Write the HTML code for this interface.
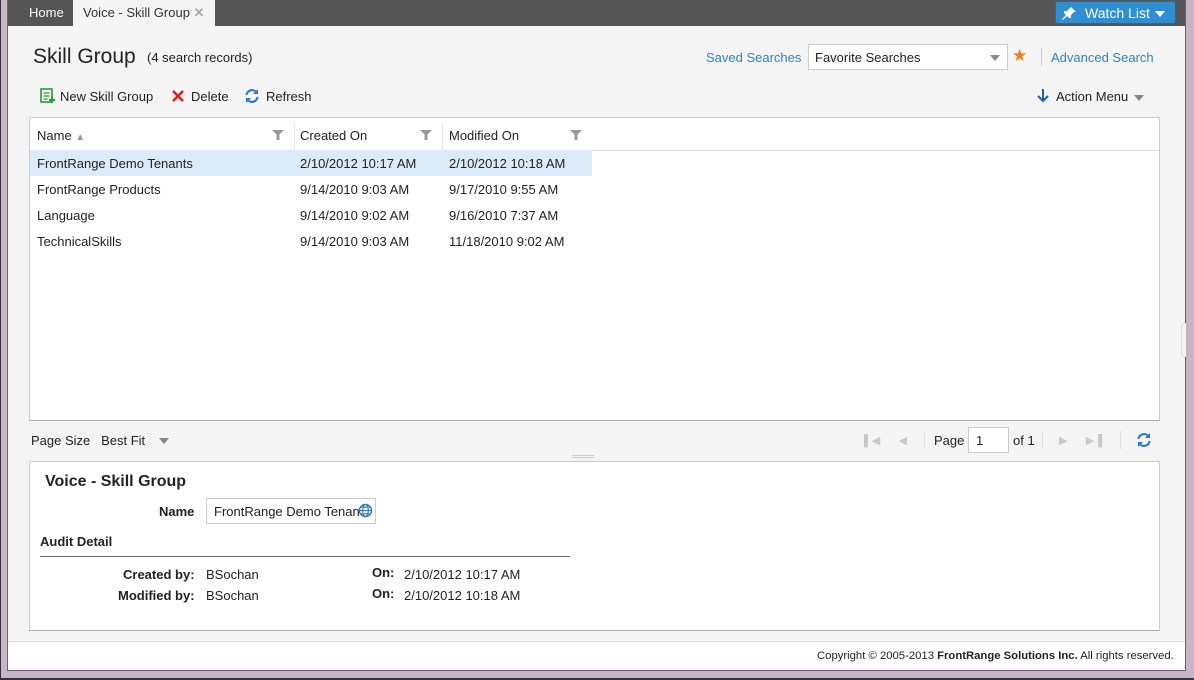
<!DOCTYPE html>
<html><head><meta charset="utf-8"><style>
*{margin:0;padding:0;box-sizing:border-box}
body{width:1194px;height:680px;overflow:hidden;font-family:"Liberation Sans",Arial,sans-serif;font-size:13px;color:#222;background:#c8b4c8;position:relative}
.a{position:absolute;white-space:nowrap}
.blue{color:#2a86c8}
.tri{display:inline-block;width:0;height:0;border-left:5px solid transparent;border-right:5px solid transparent;border-top:6px solid #888}
.filt{position:absolute;top:12px;width:12px;height:10px}
.row{position:absolute;left:0;width:562px;height:26px;line-height:26px}
.row span{position:absolute}
</style></head><body>
<div class="a" style="left:0;top:0;width:1px;height:680px;background:#333"></div>
<div class="a" style="left:7px;top:0;width:1px;height:671px;background:#7a5a7a"></div>
<div class="a" style="left:1185px;top:0;width:1px;height:671px;background:#7a5a7a"></div>
<div class="a" style="left:0;top:678px;width:1194px;height:2px;background:#333"></div>
<div class="a" style="left:7px;top:670px;width:1179px;height:1px;background:#7a5a7a"></div>
<!-- top bar -->
<div class="a" style="left:8px;top:0;width:1177px;height:26px;background:#555"></div>
<div class="a" style="left:29px;top:5px;color:#fff">Home</div>
<div class="a" style="left:73px;top:0;width:142px;height:27px;background:#f4f4f4"></div>
<div class="a" style="left:83px;top:5px;color:#333">Voice - Skill Group <span style="color:#aaa;font-weight:bold">✕</span></div>
<div class="a" style="left:1055px;top:1px;width:121px;height:23px;background:#2f8fd0;border:1px solid #1c6ea8;border-radius:3px"></div>
<svg class="a" style="left:1062px;top:6px" width="16" height="14" viewBox="0 0 16 14"><path d="M9 1l5 5-2 0-3 3 0 3-2 0-2-2-4 4-1-1 4-4-2-2 0-2 3 0 3-3z" fill="#fff"/></svg>
<div class="a" style="left:1085px;top:5px;color:#fff;font-size:14px">Watch List</div>
<div class="a" style="left:1155px;top:11px;border-left:5px solid transparent;border-right:5px solid transparent;border-top:6px solid #fff;width:0;height:0"></div>
<!-- main -->
<div class="a" style="left:8px;top:26px;width:1177px;height:615px;background:#f4f4f4"></div>
<div class="a" style="left:8px;top:641px;width:1177px;height:29px;background:#fff;border-top:1px solid #ddd"></div>
<div class="a" style="left:33px;top:45px;font-size:21px;color:#222">Skill Group</div>
<div class="a" style="left:147px;top:50px;font-size:13px">(4 search records)</div>
<div class="a blue" style="left:706px;top:50px">Saved Searches</div>
<div class="a" style="left:808px;top:44px;width:200px;height:26px;background:#fff;border:1px solid #ccc"></div>
<div class="a" style="left:815px;top:50px">Favorite Searches</div>
<div class="a tri" style="left:990px;top:55px"></div>
<div class="a" style="left:1012px;top:46px;color:#f47d0f;font-size:17px">★</div>
<div class="a" style="left:1041px;top:48px;width:1px;height:18px;background:#ccc"></div>
<div class="a blue" style="left:1051px;top:50px">Advanced Search</div>
<!-- toolbar -->
<svg class="a" style="left:40px;top:88px" width="16" height="16" viewBox="0 0 16 16"><rect x="1" y="1" width="11" height="13" fill="none" stroke="#2a9a3a" stroke-width="1.6"/><path d="M3.5 5h6M3.5 8h6M3.5 11h4" stroke="#2a9a3a" stroke-width="1.3"/><path d="M12 9v6M9 12h6" stroke="#2a9a3a" stroke-width="2"/></svg>
<div class="a" style="left:60px;top:89px">New Skill Group</div>
<svg class="a" style="left:171px;top:89px" width="14" height="14" viewBox="0 0 14 14"><path d="M2 2l10 10M12 2L2 12" stroke="#e02020" stroke-width="2.6"/></svg>
<div class="a" style="left:191px;top:89px">Delete</div>
<svg class="a" style="left:244px;top:88px" width="16" height="16" viewBox="0 0 16 16"><path d="M2.5 7A5.5 5.5 0 0 1 12.5 4.5" fill="none" stroke="#2a7ac8" stroke-width="2.2"/><path d="M14 1v5h-5z" fill="#2a7ac8"/><path d="M13.5 9A5.5 5.5 0 0 1 3.5 11.5" fill="none" stroke="#2a7ac8" stroke-width="2.2"/><path d="M2 15v-5h5z" fill="#2a7ac8"/></svg>
<div class="a" style="left:266px;top:89px">Refresh</div>
<svg class="a" style="left:1036px;top:88px" width="14" height="15" viewBox="0 0 14 15"><path d="M7 1v12M2 8l5 5 5-5" fill="none" stroke="#1a66b0" stroke-width="2"/></svg>
<div class="a" style="left:1056px;top:89px">Action Menu</div>
<div class="a tri" style="left:1134px;top:95px"></div>
<!-- grid -->
<div class="a" style="left:29px;top:117px;width:1131px;height:304px;background:#fff;border:1px solid #ccc;border-bottom-color:#aaa">
 <div class="a" style="left:0;top:32px;width:1129px;height:1px;background:#ddd"></div>
 <div class="a" style="left:264px;top:6px;width:1px;height:26px;background:#e4e4e4"></div>
 <div class="a" style="left:412px;top:6px;width:1px;height:26px;background:#e4e4e4"></div>
 <div class="a" style="left:7px;top:10px">Name <span style="color:#999;font-size:10px">▲</span></div>
 <svg class="filt" style="left:242px" viewBox="0 0 12 10"><path d="M0 0h12L7.5 4.5V10h-3V4.5z" fill="#999"/></svg>
 <div class="a" style="left:270px;top:10px">Created On</div>
 <svg class="filt" style="left:390px" viewBox="0 0 12 10"><path d="M0 0h12L7.5 4.5V10h-3V4.5z" fill="#999"/></svg>
 <div class="a" style="left:419px;top:10px">Modified On</div>
 <svg class="filt" style="left:540px" viewBox="0 0 12 10"><path d="M0 0h12L7.5 4.5V10h-3V4.5z" fill="#999"/></svg>
 <div class="row" style="top:32px;background:#dcebf9;line-height:28px"><span style="left:7px">FrontRange Demo Tenants</span><span style="left:270px">2/10/2012 10:17 AM</span><span style="left:419px">2/10/2012 10:18 AM</span></div>
 <div class="row" style="top:59px"><span style="left:7px">FrontRange Products</span><span style="left:270px">9/14/2010 9:03 AM</span><span style="left:419px">9/17/2010 9:55 AM</span></div>
 <div class="row" style="top:85px"><span style="left:7px">Language</span><span style="left:270px">9/14/2010 9:02 AM</span><span style="left:419px">9/16/2010 7:37 AM</span></div>
 <div class="row" style="top:111px"><span style="left:7px">TechnicalSkills</span><span style="left:270px">9/14/2010 9:03 AM</span><span style="left:419px">11/18/2010 9:02 AM</span></div>
</div>
<!-- pager -->
<div class="a" style="left:31px;top:433px">Page Size&nbsp;&nbsp; Best Fit</div>
<div class="a tri" style="left:159px;top:438px"></div>
<div class="a" style="left:864px;top:434px;color:#c8c8c8;font-size:11px">▌◀&nbsp;&nbsp;&nbsp;&nbsp;&nbsp;&nbsp;◀</div>
<div class="a" style="left:924px;top:431px;width:1px;height:18px;background:#ddd"></div>
<div class="a" style="left:934px;top:433px">Page</div>
<div class="a" style="left:968px;top:427px;width:41px;height:26px;background:#fff;border:1px solid #ccc"></div>
<div class="a" style="left:976px;top:433px">1</div>
<div class="a" style="left:1013px;top:433px">of 1</div>
<div class="a" style="left:1042px;top:431px;width:1px;height:18px;background:#ddd"></div>
<div class="a" style="left:1059px;top:434px;color:#c8c8c8;font-size:11px">▶&nbsp;&nbsp;&nbsp;&nbsp;&nbsp;&nbsp;▶▐</div>
<div class="a" style="left:1120px;top:431px;width:1px;height:18px;background:#ddd"></div>
<svg class="a" style="left:1136px;top:432px" width="16" height="16" viewBox="0 0 16 16"><path d="M2.5 7A5.5 5.5 0 0 1 12.5 4.5" fill="none" stroke="#2a7ac8" stroke-width="2.2"/><path d="M14 1v5h-5z" fill="#2a7ac8"/><path d="M13.5 9A5.5 5.5 0 0 1 3.5 11.5" fill="none" stroke="#2a7ac8" stroke-width="2.2"/><path d="M2 15v-5h5z" fill="#2a7ac8"/></svg>
<div class="a" style="left:572px;top:455px;width:22px;height:1px;background:#ccc"></div>
<div class="a" style="left:572px;top:457px;width:22px;height:1px;background:#ccc"></div>
<!-- detail -->
<div class="a" style="left:29px;top:461px;width:1131px;height:170px;background:#fff;border:1px solid #ccc;border-bottom-color:#aaa"></div>
<div class="a" style="left:45px;top:473px;font-size:16px;font-weight:bold">Voice - Skill Group</div>
<div class="a" style="left:159px;top:504px;font-weight:bold">Name</div>
<div class="a" style="left:206px;top:498px;width:170px;height:26px;border:1px solid #ccc;background:#fff"></div>
<div class="a" style="left:214px;top:504px">FrontRange Demo Tenan</div>
<svg class="a" style="left:358px;top:503px" width="15" height="15" viewBox="0 0 16 16"><circle cx="8" cy="8" r="6.5" fill="none" stroke="#2a7ac8" stroke-width="1.5"/><ellipse cx="8" cy="8" rx="3" ry="6.5" fill="none" stroke="#2a7ac8" stroke-width="1.2"/><path d="M1.5 8h13M3 4.5h10M3 11.5h10" stroke="#2a7ac8" stroke-width="1.2"/></svg>
<div class="a" style="left:40px;top:534px;font-weight:bold">Audit Detail</div>
<div class="a" style="left:40px;top:556px;width:530px;height:1px;background:#666"></div>
<div class="a" style="left:123px;top:567px;font-weight:bold">Created by:</div>
<div class="a" style="left:206px;top:567px">BSochan</div>
<div class="a" style="left:372px;top:565px;font-weight:bold">On:</div>
<div class="a" style="left:404px;top:567px">2/10/2012 10:17 AM</div>
<div class="a" style="left:118px;top:588px;font-weight:bold">Modified by:</div>
<div class="a" style="left:206px;top:588px">BSochan</div>
<div class="a" style="left:372px;top:586px;font-weight:bold">On:</div>
<div class="a" style="left:404px;top:588px">2/10/2012 10:18 AM</div>
<div class="a" style="left:817px;top:650px;font-size:11.3px">Copyright © 2005-2013 <b>FrontRange Solutions Inc.</b> All rights reserved.</div>
<div class="a" style="left:1181px;top:323px;width:5px;height:34px;border:1px solid #ddd;border-right:none;border-radius:3px 0 0 3px;background:#f4f4f4"></div>
</body></html>
